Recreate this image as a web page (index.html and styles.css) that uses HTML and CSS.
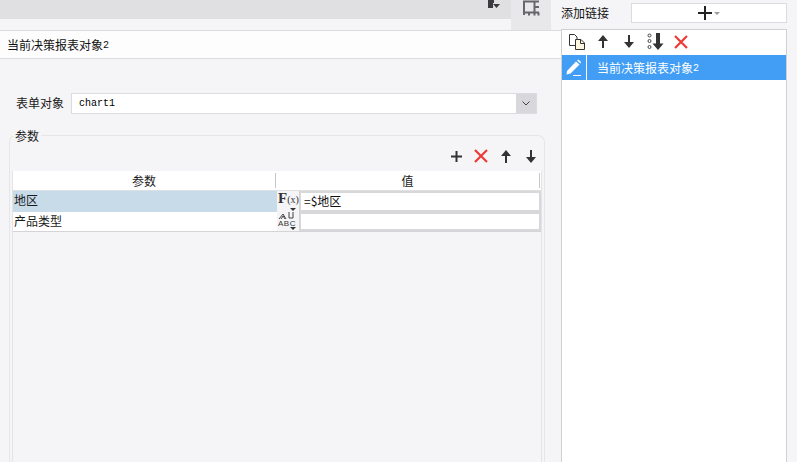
FILE: index.html
```html
<!DOCTYPE html>
<html lang="zh">
<head>
<meta charset="utf-8">
<title>当前决策报表对象2</title>
<link rel="stylesheet" href="styles.css">
</head>
<body>
<div class="app">
  <main class="left">
    <div class="top">
      <div class="strip">
        <div class="strip-gray">
          <svg class="ico-corner" width="12" height="11" viewBox="0 0 12 11"><path d="M0 0h6v3h-1v5h-5z" fill="#3a3a3e"/><path d="M5 4h7l-3.500 4z" fill="#3a3a3e"/></svg>
        </div>
      </div>
      <div class="tab">
        <svg width="17" height="17" viewBox="0 0 17 17"><path d="M1 1v14M0 1.500h16M0 12.500h16M11.500 1.500v11M11.500 7h4.500M6 12.500v3M11.500 12.500v3M15.500 12.500v3" fill="none" stroke="#66666c" stroke-width="2"/></svg>
      </div>
      <div class="gutter"></div>
    </div>
    <div class="title"><span class="cjk">当前决策报表对象</span><span class="latin">2</span></div>
    <div class="form-row">
      <label class="form-label">表单对象</label>
      <div class="combo">
        <span class="combo-text">chart1</span>
        <span class="combo-btn"><svg width="8" height="5" viewBox="0 0 8 5"><path d="M0.500 0.500L4 4L7.500 0.500" fill="none" stroke="#444" stroke-width="1"/></svg></span>
      </div>
    </div>
    <fieldset class="params">
      <legend>参数</legend>
      <div class="tools">
        <svg width="13" height="13" viewBox="0 0 13 13"><path d="M6.500 1v11M1 6.500h11" stroke="#333" stroke-width="2"/></svg>
        <svg width="14" height="14" viewBox="0 0 14 14"><path d="M1 1l12 12M13 1L1 13" stroke="#ee3b36" stroke-width="2.200"/></svg>
        <svg width="12" height="13" viewBox="0 0 12 13"><path d="M6 0L11 6H7V13H5V6H1z" fill="#333"/></svg>
        <svg width="12" height="13" viewBox="0 0 12 13"><path d="M6 13L11 7H7V0H5V7H1z" fill="#333"/></svg>
      </div>
      <div class="table">
        <div class="thead">
          <div class="th th-name">参数</div>
          <div class="th th-value">值</div>
        </div>
        <div class="row row-selected">
          <div class="name">地区</div>
          <div class="type">
            <span class="fx"><b>F</b><i>(x)</i></span>
            <svg class="caret" width="6" height="3" viewBox="0 0 6 3"><path d="M0 0h6L3 3z" fill="#333"/></svg>
          </div>
          <div class="val">=$地区</div>
        </div>
        <div class="row">
          <div class="name">产品类型</div>
          <div class="type">
            <svg class="abc-ico" width="16" height="8" viewBox="0 0 16 8"><path d="M1 7L5 2l3 5M3 7l2-3 2 3M11 0v6h4V0" fill="none" stroke="#444" stroke-width="1"/></svg>
            <span class="abc">ABC</span>
            <svg class="caret" width="6" height="3" viewBox="0 0 6 3"><path d="M0 0h6L3 3z" fill="#333"/></svg>
          </div>
          <div class="val"></div>
        </div>
      </div>
    </fieldset>
  </main>
  <aside class="right">
    <div class="add-row">
      <span class="add-label">添加链接</span>
      <div class="add-btn">
        <svg width="14" height="14" viewBox="0 0 14 14"><path d="M7 0v14M0 7h14" stroke="#222" stroke-width="2"/></svg>
        <svg width="6" height="3" viewBox="0 0 6 3"><path d="M0 0h6L3 3z" fill="#999"/></svg>
      </div>
    </div>
    <div class="panel">
      <div class="panel-tools">
        <svg width="16" height="16" viewBox="0 0 16 16"><path d="M6 11.500H0.500V0.500H5.500L8 3V5" fill="#fff" stroke="#333"/><path d="M6.500 5.500H12L15.500 9V15.500H6.500z" fill="#fdf6e0" stroke="#333"/><path d="M11.500 5.500V9.500H15.500" fill="none" stroke="#333"/></svg>
        <svg width="12" height="13" viewBox="0 0 12 13"><path d="M6 0L11 6H7V13H5V6H1z" fill="#333"/></svg>
        <svg width="12" height="13" viewBox="0 0 12 13"><path d="M6 13L11 7H7V0H5V7H1z" fill="#333"/></svg>
        <svg width="17" height="17" viewBox="0 0 17 17"><circle cx="2.500" cy="2.500" r="1.500" fill="none" stroke="#444"/><circle cx="2.500" cy="8" r="1.500" fill="none" stroke="#444"/><circle cx="2.500" cy="14" r="1.500" fill="none" stroke="#444"/><path d="M11 17L16.500 10.500H13V0H9V10.500H5.500z" fill="#333"/></svg>
        <svg width="14" height="14" viewBox="0 0 14 14"><path d="M1 1l12 12M13 1L1 13" stroke="#ee3b36" stroke-width="2.200"/></svg>
      </div>
      <div class="item">
        <div class="item-icon">
          <svg width="16" height="17" viewBox="0 0 16 17"><path d="M1 12L10 2.500L13.500 5.500L4.500 14.500L0.500 15.500zM11 1.500L12.500 0.500L15 3L14.500 4.500z" fill="#fff"/><path d="M7 16.500h8" stroke="#fff"/></svg>
        </div>
        <div class="item-text"><span class="cjk">当前决策报表对象</span><span class="latin">2</span></div>
      </div>
    </div>
  </aside>
</div>
</body>
</html>
```

FILE: styles.css
```css
* { box-sizing: border-box; }
html, body { margin: 0; height: 100%; overflow: hidden; }
body {
  background: #f5f5f7;
  color: #1a1a1a;
  font: 12px/14px "Noto Sans CJK SC", "Liberation Sans", sans-serif;
}
svg { display: block; flex: none; }
.app { display: flex; height: 462px; }

.left { width: 561px; flex: none; }
.top { display: flex; height: 30px; }
.strip { flex: 1; }
.strip-gray {
  height: 19px;
  background: #e0e0e2;
  display: flex;
  justify-content: flex-end;
  padding-right: 11px;
}
.tab {
  width: 40px;
  background: #e8e8ea;
  padding-left: 12px;
}
.gutter { width: 10px; }

.title {
  height: 29px;
  background: #fdfdfd;
  border-top: 1px solid #dcdce0;
  border-bottom: 1px solid #dcdce0;
  padding-left: 7px;
  display: flex;
  align-items: center;
  color: #111;
}
.latin { font: 10px/14px "Liberation Mono", monospace; padding-top: 2px; }
.form-row {
  display: flex;
  align-items: center;
  margin: 34px 24px 0 16px;
  height: 21px;
}
.form-label { width: 55px; margin-top: -1px; }
.combo {
  flex: 1;
  display: flex;
  background: #fff;
  border: 1px solid #dcdce0;
  height: 21px;
}
.combo-text {
  flex: 1;
  padding-left: 7px;
  font: 10px/19px "Liberation Mono", monospace;
  color: #000;
}
.combo-btn {
  width: 20px;
  background: #d8d8dc;
  display: flex;
  align-items: center;
  justify-content: center;
}

.params {
  margin: 15px 16px 0 9px;
  padding: 0 2px;
  min-width: 0;
  height: 340px;
  border: 1px solid #e6e6e9;
  border-bottom: 0;
  border-radius: 7px 7px 0 0;
}
.params legend {
  margin-left: 1px;
  padding: 0 2px;
  line-height: 13px;
}
.tools {
  height: 29px;
  display: flex;
  align-items: center;
  justify-content: flex-end;
  gap: 11px;
  padding-right: 5px;
  padding-bottom: 1px;
}
.tools svg:nth-child(3) { margin-left: 1px; }
.tools svg:nth-child(4) { margin-left: 2px; }

.table {
  display: flex;
  flex-direction: column;
  height: 300px;
  border-left: 1px solid #e4e4e6;
  border-right: 1px solid #e4e4e6;
}
.thead {
  display: flex;
  height: 20px;
  background: #fff;
  border-bottom: 1px solid #e0e0e2;
  text-align: center;
}
.th-name { width: 263px; border-right: 1px solid #c8c8c8; height: 15px; margin-top: 2px; line-height: 15px; }
.th-value { flex: 1; border-right: 1px solid #c8c8c8; height: 15px; margin-top: 2px; line-height: 15px; margin-right: 1px; }
.row {
  display: flex;
  height: 20px;
  background: #fff;
  border-bottom: 1px solid #d4d4d6;
}
.row-selected { height: 21px; border-bottom: 0; }
.name { width: 264px; padding-left: 1px; line-height: 18px; font-size: 12px; }
.row-selected .name { background: #c8dbe9; }
.type {
  width: 23px;
  padding-left: 1px;
  background: #f5f5f7;
  position: relative;
  border-right: 1px solid #d4d4d6;
  overflow: hidden;
}
.fx { display: block; font: 13px/14px "Liberation Serif", serif; color: #333; }
.fx b { font-size: 15px; }
.fx i { font-size: 10px; font-style: normal; }
.abc-ico { margin-top: 0; }
.abc { display: block; font: 8px/7px "Liberation Sans", sans-serif; letter-spacing: 0.500px; color: #333; }
.caret { position: absolute; right: 3px; bottom: 1px; }
.val {
  flex: 1;
  border: 2px solid #d8d8da;
  border-left-width: 1px;
  padding-left: 3px;
  line-height: 16px;
  background: #fff;
  color: #111;
}

.right { width: 226px; flex: none; }
.add-row {
  height: 29px;
  display: flex;
  align-items: center;
  justify-content: space-between;
}
.add-label { color: #111; margin-top: -4px; }
.add-btn {
  width: 156px;
  height: 20px;
  margin-top: -3px;
  background: #fff;
  border: 1px solid #dcdce0;
  display: flex;
  align-items: center;
  justify-content: center;
  gap: 2px;
}
.panel {
  height: 433px;
  background: #fff;
  border: 1px solid #d0d0d2;
  border-bottom: 0;
}
.panel-tools {
  height: 25px;
  display: flex;
  align-items: center;
  gap: 12px;
  padding-left: 7px;
  padding-bottom: 2px;
}
.panel-tools svg:nth-child(3) { margin-left: 2px; }
.panel-tools svg:nth-child(5) { margin-left: -2px; }
.item {
  display: flex;
  height: 25px;
  background: #429ef5;
  color: #fff;
}
.item-icon {
  width: 25px;
  border-right: 1px solid #fff;
  display: flex;
  align-items: center;
  justify-content: center;
}
.item-text {
  padding-left: 10px;
  display: flex;
  align-items: center;
}
```
